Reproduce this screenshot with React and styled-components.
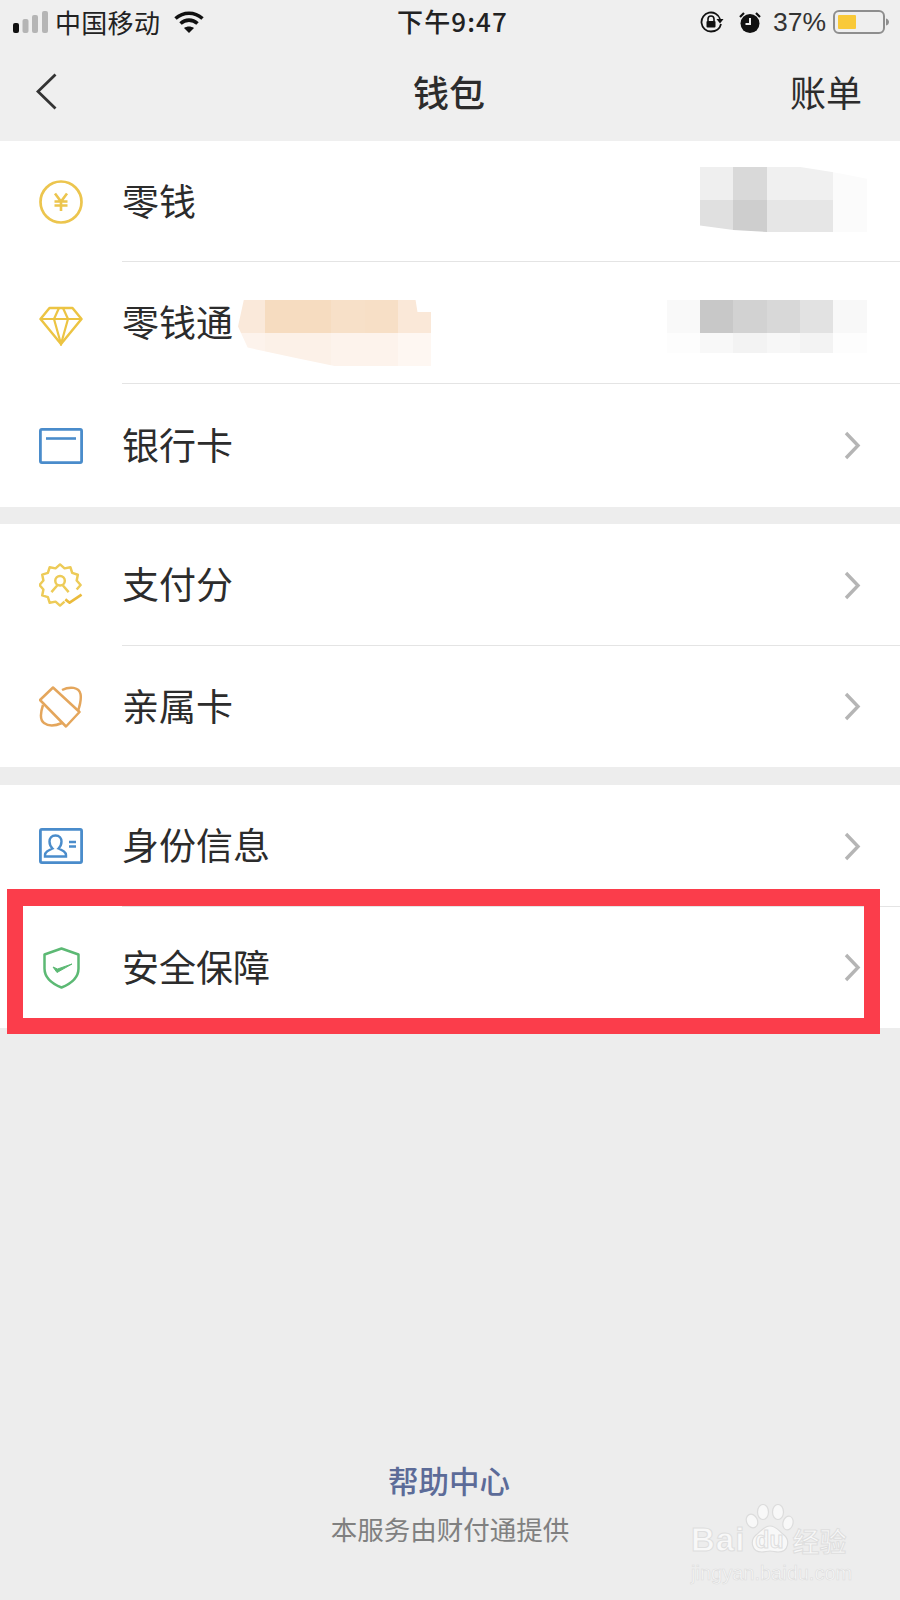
import React from 'react'
import styled, { createGlobalStyle } from 'styled-components'

const GlobalStyle = createGlobalStyle`
  html, body {
    margin: 0;
    padding: 0;
    background: #eeeeee;
  }
  * { box-sizing: border-box; }
`

const cjk = `"Noto Sans CJK SC", "Noto Sans", sans-serif`

const Page = styled.div`
  position: relative;
  width: 900px;
  height: 1600px;
  overflow: hidden;
  display: flex;
  flex-direction: column;
  background: #ededed;
  font-family: ${cjk};
  color: #2c2c2c;
`

const StatusBar = styled.div`
  height: 44px;
  padding: 0 11px 0 13px;
  display: flex;
  align-items: center;
  font-size: 26px;
  color: #222;
  background: #efefef;
`
const StatusSide = styled.div`
  flex: 1;
  display: flex;
  align-items: center;
  justify-content: ${(p) => (p.$end ? 'flex-end' : 'flex-start')};
`
const Carrier = styled.span`
  margin: -2px 14px 0 7px;
  letter-spacing: 0.3px;
`
const Clock = styled.span`
  font-size: 26px;
  font-weight: 500;
  letter-spacing: 1.100px;
  margin: -4px 0 0 3px;
`
const Percent = styled.span`
  margin: 0 7px 0 12px;
  font-family: "Liberation Sans", sans-serif;
  font-size: 26.500px;
  color: #333;
`
const Alarm = styled.svg`
  margin-left: 15px;
`

const NavBar = styled.div`
  height: 97px;
  padding: 0 38px 2px 36px;
  display: grid;
  grid-template-columns: 1fr auto 1fr;
  align-items: center;
  font-size: 36px;
  background: #efefef;
`
const NavTitle = styled.span`
  font-weight: 500;
  margin-top: -2px;
`
const NavAction = styled.span`
  justify-self: end;
  margin-top: -2px;
`

const Group = styled.div`
  background: #fff;
  margin-bottom: ${(p) => p.$gap || 17}px;
`
const Row = styled.div`
  height: ${(p) => p.$h || 122}px;
  display: flex;
  align-items: center;
  padding-left: 39px;
  position: relative;
  &::after {
    content: '';
    display: ${(p) => (p.$last ? 'none' : 'block')};
    position: absolute;
    left: 122px;
    right: 0;
    bottom: 0;
    height: 1px;
    background: #e4e4e4;
  }
`
const IconSlot = styled.div`
  width: 44px;
  height: 44px;
  margin-right: 39px;
  flex: none;
  display: flex;
  align-items: center;
  justify-content: center;
  transform: translateY(${(p) => p.$dy || 0}px);
`
const Label = styled.span`
  font-size: 37px;
  line-height: 1;
  color: #2c2c2c;
  margin-top: -3px;
`
const Chevron = styled.svg`
  margin-left: auto;
  margin-right: 39px;
  flex: none;
`

const Mosaic = styled.div`
  display: grid;
  grid-template-columns: ${(p) => p.$cols};
  grid-template-rows: ${(p) => p.$rows};
  margin-left: ${(p) => p.$left || 'auto'};
  margin-right: ${(p) => p.$right ?? 33}px;
  margin-top: ${(p) => p.$top || 0}px;
  clip-path: ${(p) => p.$clip || 'none'};
`
const Cell = styled.div`
  background: ${(p) => p.$c};
`

const Frame = styled.div`
  position: absolute;
  left: 7px;
  top: 889px;
  width: 873px;
  height: 145px;
  border: 16px solid #fb3d4b;
  border-top-width: 17px;
`

const Footer = styled.div`
  margin-top: auto;
  padding-bottom: 54px;
  display: flex;
  flex-direction: column;
  align-items: center;
`
const HelpLink = styled.div`
  font-size: 30.500px;
  line-height: 40px;
  font-weight: 500;
  color: #5c6b98;
  margin-left: -2px;
`
const Provider = styled.div`
  margin-top: 12px;
  font-size: 26.500px;
  line-height: 34px;
  color: #808080;
`

const Watermark = styled.div`
  position: absolute;
  left: 691px;
  top: 1504px;
  width: 165px;
  color: #f8f8f8;
  font-family: "Liberation Sans", sans-serif;
`
const MarkLine = styled.div`
  position: relative;
  display: flex;
  align-items: center;
  height: 28px;
  margin-top: 22px;
  font-size: 33px;
  font-weight: 700;
  letter-spacing: 1px;
  white-space: nowrap;
  -webkit-text-stroke: 1px #dedede;
`
const MarkDu = styled.span`
  margin-left: 10px;
  font-size: 23px;
  letter-spacing: 0;
`
const MarkCjk = styled.span`
  font-family: ${cjk};
  font-size: 27px;
  font-weight: 500;
  letter-spacing: 0;
  margin-left: 9px;
`
const MarkUrl = styled.div`
  margin-top: 7px;
  font-size: 20px;
  line-height: 24px;
  white-space: nowrap;
  -webkit-text-stroke: 0.6px #dcdcdc;
`
const Paw = styled.svg`
  position: absolute;
  left: 54px;
  top: 0;
`

const ChevronRight = () => (
  <Chevron width="17" height="29" viewBox="0 0 17 29" fill="none">
    <path d="M2 2l12 12.500L2 27" stroke="#b5b5b5" strokeWidth="3.400" />
  </Chevron>
)

const Coin = () => (
  <svg width="44" height="44" viewBox="0 0 44 44" fill="none" stroke="#ecc54e">
    <circle cx="22" cy="22" r="20.500" strokeWidth="2.700" />
    <path d="M16 13.500l6 8 6-8M15.500 21.500h13M15.500 25.500h13M22 21.500V31" strokeWidth="2.600" />
  </svg>
)

const Diamond = () => (
  <svg width="44" height="40" viewBox="0 0 44 40" fill="none" stroke="#ecc443" strokeWidth="2.500">
    <path d="M10.500 2h23L42.500 13 22 38 1.500 13z" strokeLinejoin="round" />
    <path d="M1.500 13h41M15 13l7 25 7-25M15 13l5-11M29 13L24 2" strokeWidth="2.200" />
  </svg>
)

const BankCard = () => (
  <svg width="44" height="36" viewBox="0 0 44 36" fill="none" stroke="#4a8ccb">
    <rect x="1.400" y="1.400" width="41.200" height="33.200" rx="1.500" strokeWidth="2.800" />
    <path d="M7 10.500h30" strokeWidth="2.600" />
  </svg>
)

// wavy 12 point seal, with a gap at the lower right for the tick
const sealPath = (() => {
  const pts = []
  for (let i = 0; i < 24; i++) {
    const a = (i / 24) * Math.PI * 2 - Math.PI / 2
    const r = i % 2 ? 18 : 21.500
    if (a > 0.5 && a < 1.3) continue
    pts.push([22 + r * Math.cos(a), 22 + r * Math.sin(a), a])
  }
  // start right after the gap so the gap stays open
  const start = pts.findIndex((p) => p[2] >= 1.3)
  const ordered = [...pts.slice(start), ...pts.slice(0, start)]
  return 'M' + ordered.map((p) => `${p[0].toFixed(1)} ${p[1].toFixed(1)}`).join('L')
})()

const ScoreBadge = () => (
  <svg width="46" height="44" viewBox="0 0 46 44" fill="none" stroke="#edcb58" strokeWidth="2.600" strokeLinejoin="round">
    <path d={sealPath} />
    <circle cx="22" cy="17.500" r="5" />
    <path d="M19 22.500l-6 7M25 22.500l6 7" />
    <path d="M27.500 37l4.500 3.500L44.500 32" stroke="#ebbb3c" strokeWidth="2.800" />
  </svg>
)

const FamilyCard = () => (
  <svg width="44" height="42" viewBox="0 0 44 42" fill="none" stroke="#e4a65c" strokeWidth="2.500" strokeLinejoin="round">
    <path d="M14 1.500L40.500 26 27 40.500 1 14z" />
    <path d="M23 4C31 0 40 1 41.500 8 42.500 13 41 19 39 25" />
    <path d="M4 19C1 28 1 34 5 37 9 40 16 40 23 37" />
  </svg>
)

const IdCard = () => (
  <svg width="44" height="36" viewBox="0 0 44 36" fill="none" stroke="#4a8ccb" strokeWidth="2.400">
    <rect x="1.400" y="1.400" width="41.200" height="33.200" rx="1.500" strokeWidth="2.800" />
    <path d="M6 28.500v-1.500c0-3 3-4.500 7.500-6.500-2-2-3-4-3-7 0-3 2-6 6-6s6 3 6 6c0 3-1 5-3 7 4.500 2 7.500 3.500 7.500 6.500v1.500z" />
    <path d="M30 14h7M30 18.500h7" />
  </svg>
)

const Shield = () => (
  <svg width="37" height="42" viewBox="0 0 37 42" fill="none" stroke="#5cb974">
    <path d="M18.500 1.500l17 6v14c0 9-7 15-17 19-10-4-17-10-17-19v-14z" strokeWidth="2.500" strokeLinejoin="round" />
    <path d="M10 20l4 5.500L29 17 14.500 22z" fill="#5cb974" strokeWidth="1" strokeLinejoin="round" />
  </svg>
)

const Signal = () => (
  <svg width="35" height="22" viewBox="0 0 35 22">
    <rect x="0" y="12" width="6" height="10" rx="2" fill="#111" />
    <rect x="9.500" y="8" width="6" height="14" rx="2" fill="#b5b5b5" />
    <rect x="19" y="4" width="6" height="18" rx="2" fill="#b5b5b5" />
    <rect x="29" y="0" width="6" height="22" rx="2" fill="#b5b5b5" />
  </svg>
)

const Wifi = () => (
  <svg width="30" height="22" viewBox="0 0 30 22" fill="none" stroke="#111" strokeWidth="3.600">
    <path d="M1.500 7.500c8-7 19-7 27 0" />
    <path d="M6.500 12.500c5-4.500 12-4.500 17 0" />
    <path d="M15 22l-5-5c3-2 7-2 10 0z" fill="#111" stroke="none" />
  </svg>
)

const RotationLock = () => (
  <svg width="24" height="22" viewBox="0 0 24 22" fill="none" stroke="#111">
    <path d="M21 13c-1 4.500-5 7.500-10 7.500A9.500 9.500 0 1 1 20 8" strokeWidth="1.800" />
    <path d="M16.500 8h7L20 12.500z" fill="#111" stroke="none" />
    <path d="M8 10V8a3 3 0 0 1 6 0v2" strokeWidth="1.600" />
    <rect x="6.500" y="10" width="9" height="6.500" rx="1" fill="#111" stroke="none" />
  </svg>
)

const AlarmIcon = () => (
  <Alarm width="22" height="21" viewBox="0 0 22 21">
    <circle cx="11" cy="11.500" r="9.500" fill="#111" />
    <path d="M11 6v6H6.500" fill="none" stroke="#eee" strokeWidth="2" />
    <path d="M1 5l4-4M21 5l-4-4" stroke="#111" strokeWidth="2.200" />
  </Alarm>
)

const Battery = () => (
  <svg width="56" height="24" viewBox="0 0 56 24" fill="none">
    <rect x="1" y="1" width="50" height="22" rx="5" stroke="#8e8e8e" strokeWidth="2" />
    <rect x="5" y="5" width="18" height="14" rx="1" fill="#f9c938" />
    <path d="M53 8.500c2 .5 3 2 3 3.500s-1 3-3 3.500z" fill="#8e8e8e" />
  </svg>
)

const BackArrow = () => (
  <svg width="21" height="37" viewBox="0 0 21 37" fill="none">
    <path d="M19.500 1.500L2 18.500 19.500 35.500" stroke="#333" strokeWidth="2.800" />
  </svg>
)

const PawMark = () => (
  <Paw width="50" height="50" viewBox="0 0 50 50" fill="#f8f8f8" stroke="#dcdcdc" strokeWidth="1.200">
    <ellipse cx="7" cy="17" rx="5.500" ry="7" transform="rotate(-25 7 17)" />
    <ellipse cx="18" cy="8" rx="5.500" ry="7.500" />
    <ellipse cx="33" cy="8" rx="5.500" ry="7.500" />
    <ellipse cx="43" cy="19" rx="5" ry="7" transform="rotate(15 43 19)" />
    <path d="M25 22c6 0 9 5 14 9 6 5 5 17-6 17-3 0-5-1-8-1s-5 1-8 1c-11 0-12-12-6-17 5-4 8-9 14-9z" />
  </Paw>
)

const mosaics = {
  change: {
    cols: '33px 34px 33px 33px 34px',
    rows: '33px 32px',
    clip: 'polygon(0 0, 60% 0, 80% 8%, 100% 18%, 100% 100%, 40% 100%, 20% 97%, 0 90%)',
    cells: ['#efefef', '#d9d9d9', '#f0f0f0', '#f0f0f0', '#fbfbfb', '#e0e0e0', '#cecece', '#e6e6e6', '#e6e6e6', '#fbfbfb'],
  },
  fund: {
    cols: '33px 33px 34px 33px 33px 34px',
    rows: '33px 20px',
    cells: ['#f9f9f9', '#c8c8c8', '#d2d2d2', '#d8d8d8', '#e2e2e2', '#f8f8f8', '#fdfdfd', '#f8f8f8', '#f3f3f3', '#f7f7f7', '#f3f3f3', '#fdfdfd'],
  },
  name: {
    cols: '27px 66px 34px 33px 33px',
    rows: '33px 33px',
    clip: 'polygon(3% 0, 92% 0, 93% 18%, 100% 18%, 100% 100%, 50% 100%, 30% 88%, 5% 72%, 0 40%)',
    cells: ['#fae9da', '#f6dcc0', '#f7e0c8', '#f7dfc6', '#fae8d8', '#fdf3ec', '#fcf1e8', '#fdf3ec', '#fdf3ec', '#fef7f2'],
  },
}

const Blur = ({ kind, ...rest }) => {
  const m = mosaics[kind]
  return (
    <Mosaic $cols={m.cols} $rows={m.rows} $clip={m.clip} {...rest}>
      {m.cells.map((c, i) => (
        <Cell key={i} $c={c} />
      ))}
    </Mosaic>
  )
}

const App = () => {
  return (
    <>
      <GlobalStyle />
      <Page>
        <StatusBar>
          <StatusSide>
            <Signal />
            <Carrier>中国移动</Carrier>
            <Wifi />
          </StatusSide>
          <Clock>下午9:47</Clock>
          <StatusSide $end>
            <RotationLock />
            <AlarmIcon />
            <Percent>37%</Percent>
            <Battery />
          </StatusSide>
        </StatusBar>

        <NavBar>
          <BackArrow />
          <NavTitle>钱包</NavTitle>
          <NavAction>账单</NavAction>
        </NavBar>

        <Group>
          <Row $h={121}>
            <IconSlot><Coin /></IconSlot>
            <Label>零钱</Label>
            <Blur kind="change" $top={-4} />
          </Row>
          <Row>
            <IconSlot $dy={3}><Diamond /></IconSlot>
            <Label>零钱通</Label>
            <Blur kind="name" $left="5px" $right={0} $top={20} />
            <Blur kind="fund" $top={7} />
          </Row>
          <Row $last $h={123}>
            <IconSlot><BankCard /></IconSlot>
            <Label>银行卡</Label>
            <ChevronRight />
          </Row>
        </Group>

        <Group $gap={18}>
          <Row>
            <IconSlot><ScoreBadge /></IconSlot>
            <Label>支付分</Label>
            <ChevronRight />
          </Row>
          <Row $last $h={121}>
            <IconSlot><FamilyCard /></IconSlot>
            <Label>亲属卡</Label>
            <ChevronRight />
          </Row>
        </Group>

        <Group>
          <Row>
            <IconSlot><IdCard /></IconSlot>
            <Label>身份信息</Label>
            <ChevronRight />
          </Row>
          <Row $last $h={121}>
            <IconSlot><Shield /></IconSlot>
            <Label>安全保障</Label>
            <ChevronRight />
          </Row>
        </Group>

        <Footer>
          <HelpLink>帮助中心</HelpLink>
          <Provider>本服务由财付通提供</Provider>
        </Footer>

        <Frame />

        <Watermark>
          <PawMark />
          <MarkLine>
            Bai
            <MarkDu>du</MarkDu>
            <MarkCjk>经验</MarkCjk>
          </MarkLine>
          <MarkUrl>jingyan.baidu.com</MarkUrl>
        </Watermark>
      </Page>
    </>
  )
}

export default App
